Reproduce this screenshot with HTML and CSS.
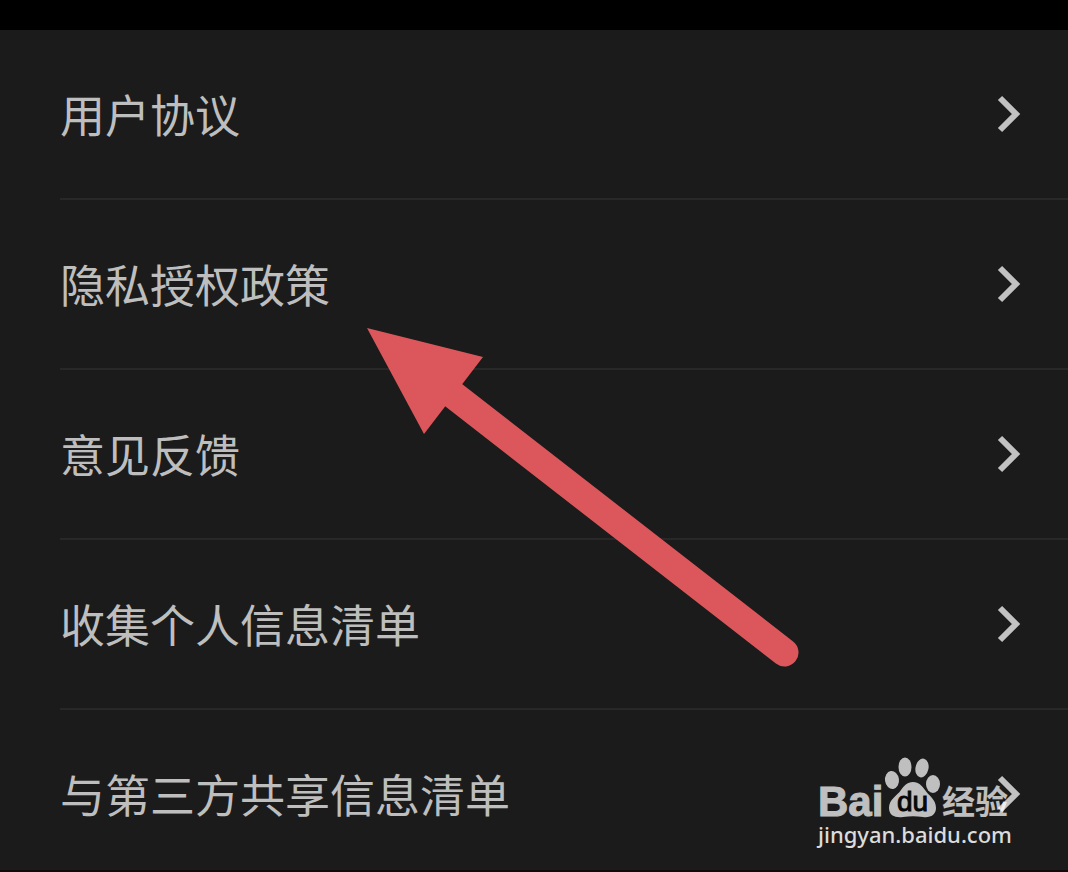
FILE: index.html
```
<!DOCTYPE html>
<html lang="zh-CN">

<head>
    <meta charset="UTF-8">
    <meta name="viewport" content="width=device-width, initial-scale=1.0">
    <title>设置</title>
    <link rel="stylesheet" href="styles.css">
</head>

<body>

    <main class="page">
        <nav class="menu">
            <a class="menu-item" href="#agreement">
                <span>用户协议</span>
                <svg class="chevron" viewBox="0 0 24 38" aria-hidden="true"><path d="M4 3 20 19 4 35"/></svg>
            </a>
            <a class="menu-item" href="#privacy">
                <span>隐私授权政策</span>
                <svg class="chevron" viewBox="0 0 24 38" aria-hidden="true"><path d="M4 3 20 19 4 35"/></svg>
            </a>
            <a class="menu-item" href="#feedback">
                <span>意见反馈</span>
                <svg class="chevron" viewBox="0 0 24 38" aria-hidden="true"><path d="M4 3 20 19 4 35"/></svg>
            </a>
            <a class="menu-item" href="#collected">
                <span>收集个人信息清单</span>
                <svg class="chevron" viewBox="0 0 24 38" aria-hidden="true"><path d="M4 3 20 19 4 35"/></svg>
            </a>
            <a class="menu-item" href="#shared">
                <span>与第三方共享信息清单</span>
                <svg class="chevron" viewBox="0 0 24 38" aria-hidden="true"><path d="M4 3 20 19 4 35"/></svg>
            </a>
        </nav>

        <!-- arrow pointing at the privacy item -->
        <svg class="arrow" viewBox="0 0 432 339" aria-hidden="true">
            <path d="M0 0 116 29 57 106Z"/>
            <path class="arrow-shaft" d="M80 62 417.5 324.5"/>
        </svg>

        <div class="watermark">
            <svg class="logo" viewBox="0 0 192 64" role="img" aria-label="Baidu 经验">
                <text class="logo-bai" x="0" y="60">Bai</text>
                <ellipse cx="74" cy="24" rx="7" ry="9" transform="rotate(-8 74 24)"/>
                <ellipse cx="87" cy="11" rx="6.5" ry="9.5"/>
                <ellipse cx="104" cy="12" rx="6.5" ry="9.5" transform="rotate(12 104 12)"/>
                <ellipse cx="115" cy="28" rx="7" ry="9"/>
                <path d="M95 26C101 26 104 30 107 34C110 39 118 43 118 52C118 59 112 62 105 61C98 60 92 60 85 61C78 62 71 60 71 52C71 43 79 40 83 34C86 30 89 26 95 26Z"/>
                <text class="logo-du" x="79" y="55">du</text>
                <text class="logo-cn" x="124" y="58">经验</text>
            </svg>
            <span class="site">jingyan.baidu.com</span>
        </div>
    </main>

</body>

</html>
```
FILE: styles.css
```
* {
    margin: 0;
    padding: 0;
    box-sizing: border-box;
}

body {
    background: #000;
    color: #bebebe;
    font-family: "Noto Sans CJK SC", sans-serif;
}

.page {
    position: relative;
    border-top: 30px solid #000;
    border-bottom: 2px solid #100a0e;
    background: #1b1b1b;
}

.menu {
    padding-left: 60px;
}

.menu-item {
    display: flex;
    justify-content: space-between;
    align-items: center;
    padding: 50px 48px 50px 0;
    border-bottom: 2px solid #282828;
    color: inherit;
    font-size: 45px;
    line-height: 68px;
    text-decoration: none;
}

.menu-item:last-child {
    padding-bottom: 42px;
    border-bottom: none;
}

.chevron {
    width: 24px;
    height: 38px;
    overflow: visible;
    fill: none;
    stroke: #c2c2c2;
    stroke-width: 6;
}

.arrow {
    position: absolute;
    top: 298px;
    left: 367px;
    width: 432px;
    height: 339px;
    fill: #dc575b;
}

.arrow-shaft {
    stroke: #dc575b;
    stroke-width: 28;
    stroke-linecap: round;
}

.watermark {
    position: absolute;
    right: 58px;
    bottom: 22px;
    width: 192px;
}

.logo {
    display: block;
    width: 192px;
    height: 64px;
    overflow: visible;
    fill: #fff;
    opacity: 0.72;
}

.logo-bai {
    font: bold 42px "Liberation Sans", sans-serif;
    stroke: #fff;
    stroke-width: 1;
}

.logo-du {
    fill: #000;
    font: 28px "Liberation Sans", sans-serif;
    stroke: #000;
    stroke-width: 1;
}

.logo-cn {
    font: bold 33px "Noto Sans CJK SC", sans-serif;
}

.site {
    display: block;
    color: #dcdcdc;
    font-family: "Noto Sans", sans-serif;
    font-size: 22px;
    font-weight: 500;
    line-height: 28px;
    white-space: nowrap;
}
```
